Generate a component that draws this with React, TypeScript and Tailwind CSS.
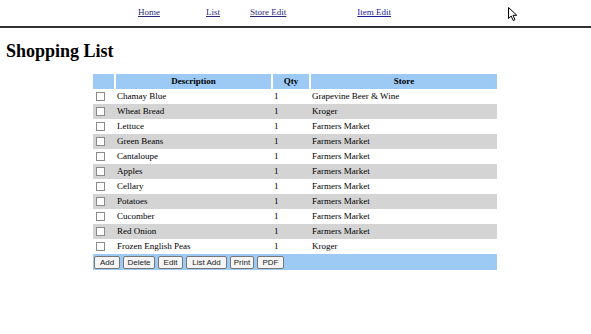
import React from 'react';

const items = [
  { desc: 'Chamay Blue', qty: 1, store: 'Grapevine Beer & Wine' },
  { desc: 'Wheat Bread', qty: 1, store: 'Kroger' },
  { desc: 'Lettuce', qty: 1, store: 'Farmers Market' },
  { desc: 'Green Beans', qty: 1, store: 'Farmers Market' },
  { desc: 'Cantaloupe', qty: 1, store: 'Farmers Market' },
  { desc: 'Apples', qty: 1, store: 'Farmers Market' },
  { desc: 'Cellary', qty: 1, store: 'Farmers Market' },
  { desc: 'Potatoes', qty: 1, store: 'Farmers Market' },
  { desc: 'Cucomber', qty: 1, store: 'Farmers Market' },
  { desc: 'Red Onion', qty: 1, store: 'Farmers Market' },
  { desc: 'Frozen English Peas', qty: 1, store: 'Kroger' },
];

const buttons = [
  { label: 'Add', w: 'w-[26px]' },
  { label: 'Delete', w: 'w-[32px]' },
  { label: 'Edit', w: 'w-[25px]' },
  { label: 'List Add', w: 'w-[41px]' },
  { label: 'Print', w: 'w-[24px]' },
  { label: 'PDF', w: 'w-[27px]' },
];

export default function App() {
  return (
    <div className="w-[591px] h-[334px] bg-white relative font-['Liberation_Serif',serif] text-black">
      <div className="flex h-[26px] items-center text-[9px] text-[#2a2a7a]">
        <a className="underline ml-[138px]">Home</a>
        <a className="underline ml-[46px]">List</a>
        <a className="underline ml-[30px]">Store Edit</a>
        <a className="underline ml-[71px] text-[#1a1a9a]">Item Edit</a>
      </div>
      <svg className="absolute left-[508px] top-[7px]" width="11" height="15" viewBox="0 0 11 15">
        <path d="M0.5 0.5 L0.5 11.5 L3.2 9 L5.2 13.5 L7 12.7 L5 8.3 L8.8 8.3 Z" fill="white" stroke="black" strokeWidth="1" />
      </svg>
      <div className="h-[2px] bg-[#333]" />
      <h1 className="text-[18px] font-bold ml-[6px] mt-[12px] leading-[22px]">Shopping List</h1>
      <table className="ml-[93px] mt-[12px] w-[404px] border-collapse text-[9px] leading-[15px]">
        <thead>
          <tr className="bg-[#9ccaf5] h-[14px] font-bold">
            <th className="w-[22px] border-r-2 border-white"></th>
            <th className="w-[157px] border-r-2 border-white text-center">Description</th>
            <th className="w-[38px] border-r-2 border-white text-center">Qty</th>
            <th className="text-center">Store</th>
          </tr>
        </thead>
        <tbody>
          {items.map((it, i) => (
            <tr key={i} className={i % 2 === 1 ? 'bg-[#d4d4d4]' : 'bg-white'}>
              <td className="h-[15px] pl-[3px]">
                <div className="w-[9px] h-[9px] border border-[#8a8a8a] bg-white" />
              </td>
              <td className="pl-[2px]">{it.desc}</td>
              <td className="pl-[2px]">{it.qty}</td>
              <td className="pl-[2px]">{it.store}</td>
            </tr>
          ))}
          <tr className="bg-[#9ccaf5]">
            <td colSpan={4} className="h-[16px] px-[1px]">
              <div className="flex gap-[3px] font-['Liberation_Sans',sans-serif]">
                {buttons.map((b) => (
                  <button
                    key={b.label}
                    className={`${b.w} h-[13px] px-0 text-[8px] leading-[11px] bg-[#f4f4f4] border border-[#777] rounded-[2px] text-[#222] whitespace-nowrap`}
                  >
                    {b.label}
                  </button>
                ))}
              </div>
            </td>
          </tr>
        </tbody>
      </table>
    </div>
  );
}
